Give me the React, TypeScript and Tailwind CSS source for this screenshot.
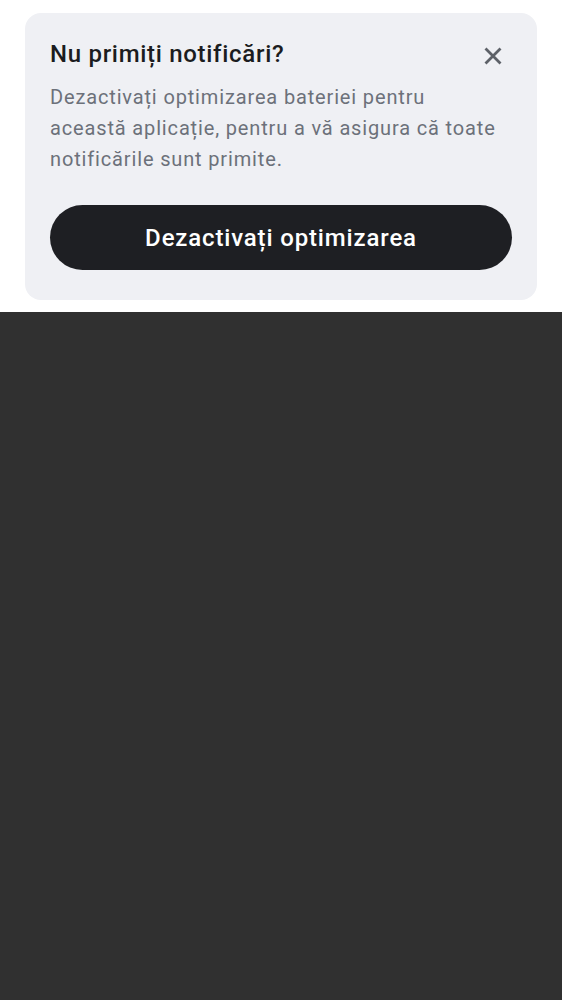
import React from 'react';

export default function App() {
  return (
    <div className="min-h-screen flex flex-col bg-white" style={{ fontFamily: 'Roboto, "Noto Sans", sans-serif' }}>
      {/* Battery notice card */}
      <div className="px-[25px] pt-[13px] pb-[12px]">
        <div className="rounded-[16px] bg-[#eff0f4] px-[25px] pt-[26px] pb-[30px]">
          <div className="flex items-start justify-between">
            <h2 className="text-[24px] leading-[30px] font-medium tracking-[0.7px] text-[#1b1c20]">Nu primiți notificări?</h2>
            <button className="-mr-[1px] -mt-[3px] -mb-[7px] flex h-10 w-10 items-center justify-center text-[#5d6168]">
              <svg width="18" height="18" viewBox="0 0 18 18" fill="none" stroke="currentColor" strokeWidth="2.8">
                <path d="M1.5 1.5L16.5 16.5M16.5 1.5L1.5 16.5" />
              </svg>
            </button>
          </div>
          <p className="mt-[13px] pr-[12px] text-[20px] leading-[31px] tracking-[0.85px] text-[#6c717a]">
            Dezactivați optimizarea bateriei pentru această aplicație, pentru a vă asigura că toate notificările sunt primite.
          </p>
          <button className="mt-[30px] h-[65px] w-full rounded-full bg-[#1e1f23] text-[24px] font-medium tracking-[0.85px] text-white">
            Dezactivați optimizarea
          </button>
        </div>
      </div>

      {/* Content area */}
      <div className="flex-1 bg-[#303030]" />
    </div>
  );
}
